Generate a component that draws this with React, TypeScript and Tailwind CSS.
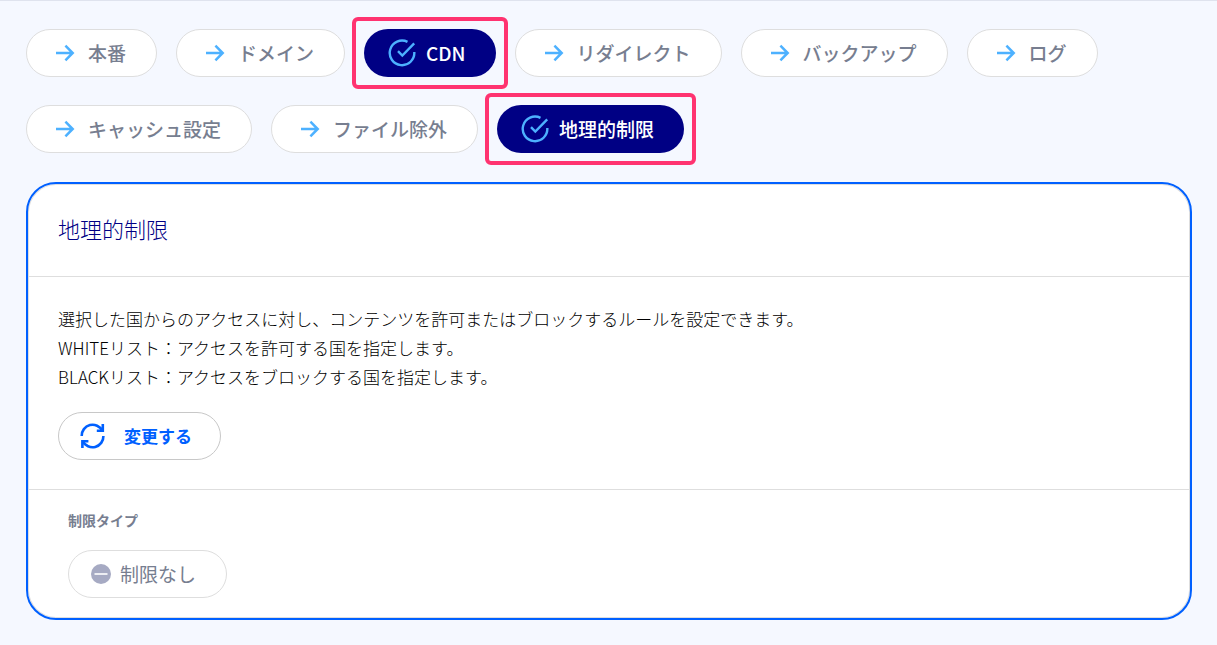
import clsx from "clsx";
import React from "react";

type Tab = {
  label: string;
  active?: boolean;
};

const siteTabs: Tab[] = [
  { label: "本番" },
  { label: "ドメイン" },
  { label: "CDN", active: true },
  { label: "リダイレクト" },
  { label: "バックアップ" },
  { label: "ログ" },
];

const cdnTabs: Tab[] = [{ label: "キャッシュ設定" }, { label: "ファイル除外" }, { label: "地理的制限", active: true }];

function ArrowIcon() {
  return (
    <svg width="20" height="18" viewBox="0 0 20 18" fill="none" stroke="#4db1ff" strokeWidth="2.5" aria-hidden="true">
      <path d="M1 9h16.5M10.4 1.7L17.7 9l-7.3 7.3" />
    </svg>
  );
}

function CheckIcon() {
  return (
    <svg width="28" height="28" viewBox="0 0 28 28" fill="none" stroke="#4db1ff" strokeWidth="2.4" aria-hidden="true">
      <path d="M19.5 2.9A12.3 12.3 0 1 0 26.3 13" />
      <path d="M10 12.2l4.3 4.3L26.2 4.4" />
    </svg>
  );
}

function RefreshIcon() {
  return (
    <svg width="26" height="28" viewBox="0 0 26 28" fill="none" stroke="#0060ff" strokeWidth="2.6" aria-hidden="true">
      <path d="M1.7 14A10.9 10.9 0 0 1 22.3 8.7" />
      <path d="M22.8 2v6.7h-6" />
      <path d="M23.4 14A10.9 10.9 0 0 1 2.8 19.3" />
      <path d="M2.4 26v-6.7h6" />
    </svg>
  );
}

function MinusIcon() {
  return (
    <svg width="20" height="20" viewBox="0 0 20 20" aria-hidden="true">
      <circle cx="10" cy="10" r="10" fill="#a6aac3" />
      <path d="M3.5 10h13" stroke="#fff" strokeWidth="1.6" />
    </svg>
  );
}

function TabLink({ label, active }: Tab) {
  return (
    <li className="relative">
      <a
        href="#"
        aria-current={active ? "page" : undefined}
        className={clsx(
          "flex h-12 items-center rounded-full text-[19px] leading-7 font-medium whitespace-nowrap",
          active
            ? "gap-[10px] bg-[#000084] pr-[30px] pl-6 text-white"
            : "gap-[13px] border border-[#dedede] bg-white pr-[30px] pl-7 text-[#777e90]"
        )}
      >
        {active ? <CheckIcon /> : <ArrowIcon />}
        <span>{label}</span>
      </a>
      {active && (
        <span className="pointer-events-none absolute -inset-3 rounded-md border-4 border-[#ff3370]" aria-hidden="true" />
      )}
    </li>
  );
}

function TabList({ name, tabs }: { name: string; tabs: Tab[] }) {
  return (
    <nav aria-label={name}>
      <ul className="flex flex-wrap gap-x-[19px] gap-y-7">
        {tabs.map((tab) => (
          <TabLink key={tab.label} {...tab} />
        ))}
      </ul>
    </nav>
  );
}

function GeoRestriction() {
  return (
    <section className="rounded-[30px] border-2 border-[#0060ff] bg-white shadow-[inset_0_0_0_1px_#dedede]">
      <header className="border-b border-[#dedede] px-[30px] pt-7 pb-8">
        <h1 className="text-[22px] leading-8 font-light text-[#000084]">地理的制限</h1>
      </header>
      <div className="border-b border-[#dedede] px-[30px] pt-[27px] pb-[29px]">
        <p className="text-[17px] leading-[29px] font-light text-black">
          選択した国からのアクセスに対し、コンテンツを許可またはブロックするルールを設定できます。
          <br />
          WHITEリスト：アクセスを許可する国を指定します。
          <br />
          BLACKリスト：アクセスをブロックする国を指定します。
        </p>
        <button
          type="button"
          className="mt-[21px] flex h-12 items-center gap-[18px] rounded-full border border-[#c8c8c8] bg-white pr-7 pl-[21px] text-[17px] leading-7 font-bold text-[#0060ff]"
        >
          <RefreshIcon />
          <span>変更する</span>
        </button>
      </div>
      <dl className="px-10 pt-[19px] pb-5">
        <dt className="text-[14px] leading-[22px] font-bold text-[#777e90]">制限タイプ</dt>
        <dd className="mt-[19px] flex">
          <span className="flex h-12 items-center gap-[9px] rounded-full border border-[#dedede] pr-[30px] pl-[22px] text-[19px] leading-7 text-[#777e90]">
            <MinusIcon />
            <span>制限なし</span>
          </span>
        </dd>
      </dl>
    </section>
  );
}

export default function App() {
  return (
    <main className="min-h-screen border-t border-[#dfe3ee] bg-[#f5f8ff] pt-7 pr-[25px] pb-[25px] pl-[26px] font-['Noto_Sans_CJK_JP',sans-serif]">
      <div className="flex flex-col gap-7">
        <TabList name="サイト" tabs={siteTabs} />
        <TabList name="CDN" tabs={cdnTabs} />
      </div>
      <div className="mt-[29px]">
        <GeoRestriction />
      </div>
    </main>
  );
}
